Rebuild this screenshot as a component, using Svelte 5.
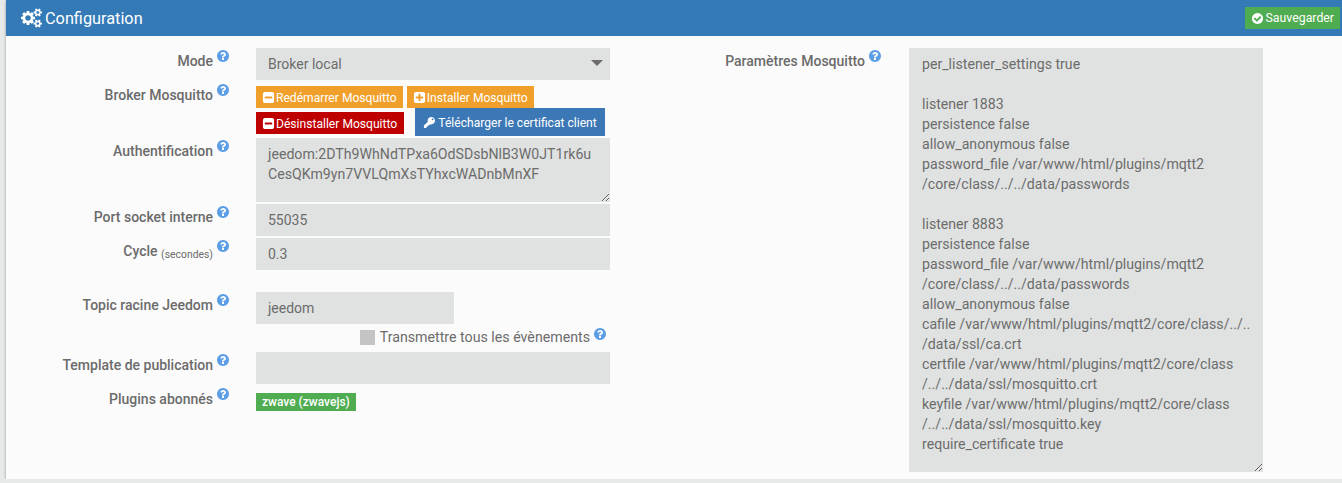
<script lang="ts">
  const SQUARE = 'm256-544v960q0 119-84.5 203.5t-203.5 84.5h-960q-119 0-203.5-84.5t-84.5-203.5v-960q0-119 84.5-203.5t203.5-84.5h960q119 0 203.5 84.5t84.5 203.5z'
  const ICONS: Record<string, string> = {
    help: 'M1024 1376v-192q0-14-9-23t-23-9h-192q-14 0-23 9t-9 23v192q0 14 9 23t23 9h192q14 0 23-9t9-23zm256-672q0-88-55.5-163t-138.5-116-170-41q-243 0-371 213-15 24 8 42l132 100q7 6 19 6 16 0 25-12 53-68 86-92 34-24 86-24 48 0 85.5 26t37.5 59q0 38-20 61t-68 45q-63 28-115.5 86.5t-52.5 125.5v36q0 14 9 23t23 9h192q14 0 23-9t9-23q0-19 21.5-49.5t54.5-49.5q32-18 49-28.5t46-35 44.5-48 28-60.5 12.5-81zm384 192q0 209-103 385.5t-279.5 279.5-385.5 103-385.5-103-279.5-279.5-103-385.5 103-385.5 279.5-279.5 385.5-103 385.5 103 279.5 279.5 103 385.5z',
    minus: 'M1408 960v-128q0-26-19-45t-45-19h-896q-26 0-45 19t-19 45v128q0 26 19 45t45 19h896q26 0 45-19t19-45z' + SQUARE,
    plus: 'M1408 960v-128q0-26-19-45t-45-19h-320v-320q0-26-19-45t-45-19h-128q-26 0-45 19t-19 45v320h-320q-26 0-45 19t-19 45v128q0 26 19 45t45 19h320v320q0 26 19 45t45 19h128q26 0 45-19t19-45v-320h320q26 0 45-19t19-45z' + SQUARE,
    check: 'M1412 734q0-28-18-46l-91-90q-19-19-45-19t-45 19l-408 407-226-226q-19-19-45-19t-45 19l-91 90q-18 18-18 46 0 27 18 45l362 362q19 19 45 19 27 0 46-19l543-543q18-18 18-45zm252 162q0 209-103 385.5t-279.5 279.5-385.5 103-385.5-103-279.5-279.5-103-385.5 103-385.5 279.5-279.5 385.5-103 385.5 103 279.5 279.5 103 385.5z',
    // bow top right, plain shaft down to the left
    key: 'M1130 128c-260 0-490 230-490 490 0 62 10 110 30 160L128 1320v344h344v-172h172v-172h172l184-184c50 20 98 30 130 30 260 0 534-270 534-530 0-290-244-508-534-508zM1330 330a130 130 0 1 1 0 260 130 130 0 1 1 0-260z',
    cogs: 'M896 896q0-106-75-181t-181-75-181 75-75 181 75 181 181 75 181-75 75-181zm768 512q0-52-38-90t-90-38-90 38-38 90q0 53 37.5 90.5t90.5 37.5 90.5-37.5 37.5-90.5zm0-1024q0-52-38-90t-90-38-90 38-38 90q0 53 37.5 90.5t90.5 37.5 90.5-37.5 37.5-90.5zm-384 421v185q0 10-7 19.5t-16 10.5l-155 24q-11 35-32 76 34 48 90 115 7 11 7 20 0 12-7 19-23 30-82.5 89.5t-78.5 59.5q-11 0-21-7l-115-90q-37 19-77 31-11 108-23 155-7 24-30 24h-186q-11 0-20-7.5t-10-17.5l-23-153q-34-10-75-31l-118 89q-7 7-20 7-11 0-21-8-144-133-144-160 0-9 7-19 10-14 41-53t47-61q-23-44-35-82l-152-24q-10-1-17-9.5t-7-19.5v-185q0-10 7-19.5t16-10.5l155-24q11-35 32-76-34-48-90-115-7-11-7-20 0-12 7-20 22-30 82-89t79-59q11 0 21 7l115 90q34-18 77-32 11-108 23-154 7-24 30-24h186q11 0 20 7.5t10 17.5l23 153q34 10 75 31l118-89q8-7 20-7 11 0 21 8 144 133 144 160 0 8-7 19-12 16-42 54t-45 60q23 48 34 82l152 23q10 2 17 10.5t7 19.5zm640 533v140q0 16-149 31-12 27-30 52 51 113 51 138 0 4-4 7-122 71-124 71-8 0-46-47t-52-68q-20 2-30 2t-30-2q-14 21-52 68t-46 47q-2 0-124-71-4-3-4-7 0-25 51-138-18-25-30-52-149-15-149-31v-140q0-16 149-31 13-29 30-52-51-113-51-138 0-4 4-7 4-2 35-20t59-34 30-16q8 0 46 46.5t52 67.5q20-2 30-2t30 2q51-71 92-112l6-2q4 0 124 70 4 3 4 7 0 25-51 138 17 23 30 52 149 15 149 31zm0-1024v140q0 16-149 31-12 27-30 52 51 113 51 138 0 4-4 7-122 71-124 71-8 0-46-47t-52-68q-20 2-30 2t-30-2q-14 21-52 68t-46 47q-2 0-124-71-4-3-4-7 0-25 51-138-18-25-30-52-149-15-149-31v-140q0-16 149-31 13-29 30-52-51-113-51-138 0-4 4-7 4-2 35-20t59-34 30-16q8 0 46 46.5t52 67.5q20-2 30-2t30 2q51-71 92-112l6-2q4 0 124 70 4 3 4 7 0 25-51 138 17 23 30 52 149 15 149 31z',
  }

  const token = 'jeedom:2DTh9WhNdTPxa6OdSDsbNlB3W0JT1rk6u\nCesQKm9yn7VVLQmXsTYhxcWADnbMnXF'

  const mosquittoConf = `per_listener_settings true

listener 1883
persistence false
allow_anonymous false
password_file /var/www/html/plugins/mqtt2
/core/class/../../data/passwords

listener 8883
persistence false
password_file /var/www/html/plugins/mqtt2
/core/class/../../data/passwords
allow_anonymous false
cafile /var/www/html/plugins/mqtt2/core/class/../..
/data/ssl/ca.crt
certfile /var/www/html/plugins/mqtt2/core/class
/../../data/ssl/mosquitto.crt
keyfile /var/www/html/plugins/mqtt2/core/class
/../../data/ssl/mosquitto.key
require_certificate true`
</script>

{#snippet icon(name: string, cls: string)}
  <svg class={cls} viewBox={name === 'cogs' ? '0 0 1920 1792' : '0 0 1792 1792'} aria-hidden="true">
    <path d={ICONS[name]} fill="currentColor" fill-rule="evenodd" />
  </svg>
{/snippet}

{#snippet label(text: string, unit?: string)}
  <div class="label">
    <span>{text}{#if unit}&nbsp;<small>{unit}</small>{/if}</span>
    {@render icon('help', 'help')}
  </div>
{/snippet}

<div class="panel">
  <header class="panel-heading">
    <h3 class="panel-title">
      {@render icon('cogs', 'title-icon')}
      Configuration
    </h3>
    <button class="btn btn-save">
      {@render icon('check', 'btn-icon')}
      Sauvegarder
    </button>
  </header>

  <div class="panel-body">
    <!-- Left column -->
    <form class="col-left">
      <div class="row mode">
        {@render label('Mode')}
        <div class="select">
          Broker local
          <span class="caret"></span>
        </div>
      </div>

      <div class="row broker">
        {@render label('Broker Mosquitto')}
        <div class="actions">
          <div class="action-line top">
            <button type="button" class="btn btn-warning">{@render icon('minus', 'btn-icon')} Redémarrer Mosquitto</button>
            <button type="button" class="btn btn-warning">{@render icon('plus', 'btn-icon')} Installer Mosquitto</button>
          </div>
          <div class="action-line bottom">
            <button type="button" class="btn btn-danger">{@render icon('minus', 'btn-icon')} Désinstaller Mosquitto</button>
            <button type="button" class="btn btn-primary">{@render icon('key', 'btn-icon')} Télécharger le certificat client</button>
          </div>
        </div>
      </div>

      <div class="row auth">
        {@render label('Authentification')}
        <textarea class="field area-auth" readonly value={token}></textarea>
      </div>

      <div class="row port">
        {@render label('Port socket interne')}
        <div class="field">55035</div>
      </div>

      <div class="row cycle">
        {@render label('Cycle', '(secondes)')}
        <div class="field">0.3</div>
      </div>

      <div class="row topic">
        {@render label('Topic racine Jeedom')}
        <div class="field short">jeedom</div>
      </div>

      <div class="row forward">
        <div></div>
        <div class="check-line">
          <span class="checkbox"></span>
          <span>Transmettre tous les évènements</span>
          {@render icon('help', 'help')}
        </div>
      </div>

      <div class="row template">
        {@render label('Template de publication')}
        <div class="field"></div>
      </div>

      <div class="row plugins">
        {@render label('Plugins abonnés')}
        <div><span class="badge">zwave (zwavejs)</span></div>
      </div>
    </form>

    <!-- Right column -->
    <div class="col-right">
      {@render label('Paramètres Mosquitto')}
      <textarea class="field area-conf" readonly value={mosquittoConf}></textarea>
    </div>
  </div>
</div>

<style>
  :global(body) {
    margin: 0;
    background: #e8e9e9;
    font-family: Roboto, "Liberation Sans", sans-serif;
    overflow: hidden;
  }

  .panel {
    margin-left: 6px;
    height: 479px;
    background: #fbfbfb;
    box-shadow: 0 1px 3px rgba(0, 0, 0, 0.35);
    display: flex;
    flex-direction: column;
  }

  .panel-heading {
    height: 36px;
    flex-shrink: 0;
    box-sizing: border-box;
    background: #337ab7;
    display: flex;
    align-items: center;
    justify-content: space-between;
    padding: 0 2px 0 15px;
  }
  .panel-title {
    margin: 0;
    display: flex;
    align-items: center;
    gap: 3px;
    font-size: 16.3px;
    font-weight: 400;
    color: #fff;
  }
  .title-icon { width: 21px; height: 20px; }

  .panel-body {
    flex: 1;
    display: flex;
    padding-top: 12px;
  }

  .col-left {
    width: 604px;
    display: flex;
    flex-direction: column;
  }

  .row {
    display: grid;
    grid-template-columns: 224px 354px;
    column-gap: 26px;
  }
  .broker { margin-top: 6px; }
  .auth, .port, .cycle { margin-top: 2px; }
  .topic { margin-top: 22px; }
  .forward { margin-top: 6px; height: 22px; }
  .plugins { margin-top: 7px; }

  .label {
    display: flex;
    justify-content: flex-end;
    align-items: flex-start;
    gap: 3px;
    font-size: 14px;
    font-weight: 500;
    line-height: 20px;
    padding-top: 3px;
    color: #6b6b6b;
  }
  .label small {
    font-size: 10.4px;
    font-weight: 400;
    vertical-align: -2px;
  }
  .broker .label { padding-top: 0; margin-top: -1px; }
  .plugins .label { padding-top: 0; margin-top: -2px; }

  .help {
    width: 14px;
    height: 14px;
    margin-top: -2px;
    color: #5b9ee6;
    flex-shrink: 0;
  }

  .field, .select {
    box-sizing: border-box;
    height: 32px;
    width: 354px;
    padding: 0 12px;
    border: 0;
    border-radius: 0;
    outline: 0;
    background: #e0e2e1;
    color: #6c6c6c;
    font-family: inherit;
    font-size: 14px;
    line-height: 32px;
    display: block;
  }
  .field.short { width: 198px; }

  .select { position: relative; }
  .caret {
    position: absolute;
    right: 7px;
    top: 12px;
    width: 0;
    height: 0;
    border-left: 6px solid transparent;
    border-right: 6px solid transparent;
    border-top: 6px solid #6c6c6c;
  }

  textarea.field {
    font-size: 14.15px;
    line-height: 20px;
    padding-top: 6px;
    padding-bottom: 6px;
    resize: both;
  }
  .area-auth { height: 64px; }
  .area-conf { height: 424px; padding-left: 13px; }

  .actions { display: flex; flex-direction: column; }
  .action-line { display: flex; align-items: center; }
  .action-line.top { gap: 4px; height: 22px; }
  .action-line.bottom { gap: 11px; height: 28px; }

  .btn {
    box-sizing: border-box;
    height: 22px;
    padding: 1px 6px 0;
    border: 0;
    border-radius: 0;
    display: inline-flex;
    align-items: center;
    gap: 1px;
    font-family: inherit;
    font-size: 12.1px;
    color: #fff;
    white-space: nowrap;
    cursor: pointer;
  }
  .btn-icon { width: 13px; height: 13px; flex-shrink: 0; }
  .btn-warning { background: #f0a02a; }
  .btn-danger { background: #bf0000; padding-right: 7px; margin-top: 2px; }
  .btn-primary {
    background: #3b78b5;
    height: 28px;
    padding: 1px 8px 0;
    gap: 2px;
  }
  .btn-save { background: #4fac50; font-size: 12.3px; gap: 2px; padding-top: 0; }

  .check-line {
    display: flex;
    justify-content: flex-end;
    align-items: flex-start;
    gap: 5px;
    padding-right: 3px;
    font-size: 14.2px;
    line-height: 15px;
    color: #6c6c6c;
  }
  .check-line .help { margin-left: -2px; margin-top: -3px; }
  .checkbox {
    width: 15px;
    height: 15px;
    background: #c4c4c4;
    flex-shrink: 0;
  }

  .badge {
    display: inline-block;
    height: 18px;
    line-height: 18px;
    padding: 0 6px;
    background: #4fac50;
    color: #fff;
    font-size: 12px;
    font-weight: 500;
  }

  .col-right {
    display: grid;
    grid-template-columns: 224px 354px;
    column-gap: 27px;
    align-items: start;
    padding-left: 48px;
  }
</style>
